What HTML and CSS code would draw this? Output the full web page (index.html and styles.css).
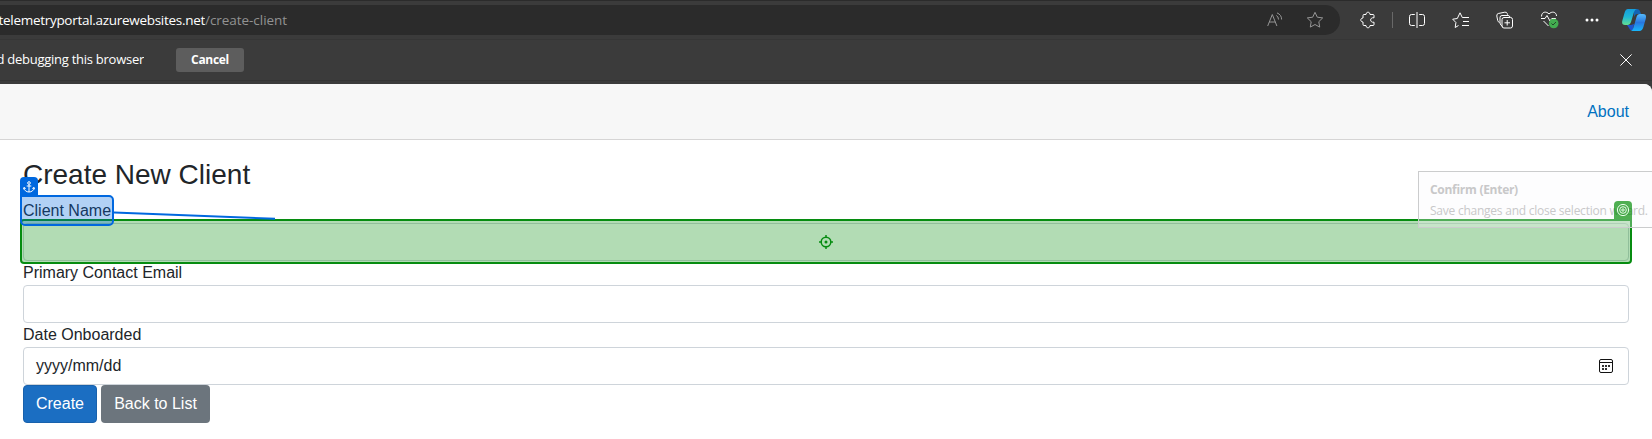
FILE: index.html
```
<!DOCTYPE html>
<html lang="en">
<head>
<meta charset="utf-8">
<title>Create New Client</title>
<link rel="stylesheet" href="styles.css">
</head>
<body>
<div class="browser">
  <div class="toolbar">
    <div class="address">
      <div class="host"><span>telemetryportal.azurewebsites.net</span></div><span class="path">/create-client</span>
      <div class="address-icons">
        <svg width="16" height="16" viewBox="0 0 16 16"><path d="M.7 14 5.300 2.500 9.900 14M2.200 10h6.200M9.300 3.500q2.200 1 2.200 4M10 .9q4.600 1.800 4.600 6.600"/></svg>
        <svg width="18" height="18" viewBox="0 0 18 18"><path d="M9 1.300 11.300 6.200 16.700 6.900 12.800 10.700 13.700 16.100 9 13.500 4.300 16.100 5.200 10.700 1.300 6.900 6.700 6.200Z"/></svg>
      </div>
    </div>
    <div class="tools">
      <svg class="puzzle" width="16" height="18" viewBox="0 0 16 18"><path d="M4 3.500h2c-.2-3 4.200-3 4 0h3q1 0 1 1v2.300c-4.500-.8-4.500 5.200 0 4.400v2.300q0 1-1 1h-3c.2 3-4.200 3-4 0H4q-1 0-1-1V11c-3-.2-3-3.800 0-4V4.500q0-1 1-1Z"/></svg>
      <i class="divider"></i>
      <svg class="split" width="16" height="16" viewBox="0 0 16 16"><path d="M8 0v16M5.800 2.500H2.500q-2 0-2 2v7q0 2 2 2h3.300M10.200 2.500h3.300q2 0 2 2v7q0 2-2 2h-3.300"/></svg>
      <svg class="favs" width="18" height="16" viewBox="0 0 18 16"><path d="m6.500 13.500-3.300 2 .7-5L.7 7.200 5.300 6.500 8 .8l2.300 4.700H17M11 9.500h6M10 13.500h7"/></svg>
      <svg class="collections" width="18" height="18" viewBox="0 0 18 18"><path d="M3.500 11.500q-1.500-.5-1.800-2L.8 5q-.3-2 1.500-2.500l6.500-1.300q2-.4 2.500 1.500l.2 1M6.500 15.500Q4 14 4 12V6.500q0-2 2-2h6q1.500 0 2 1.500"/><rect x="6" y="6.500" width="10.500" height="10.500" rx="2"/><path d="M11.200 9v5.500M8.500 11.800H14"/></svg>
      <svg class="health" width="19" height="18" viewBox="0 0 19 18"><path d="M1.500 5.500C1.500.5 6.500 0 9 3c2.500-3 7.500-2.300 7.500 2M1 7.500h4l2-3 3 5.500 1.800-2.500h4M3.500 10l5 5"/><circle cx="13.700" cy="12.500" r="4.800" class="ok"/><path class="tick" d="m11.500 12.500 1.500 1.500 3-3"/></svg>
      <svg class="more" width="14" height="4" viewBox="0 0 14 4"><circle cx="2" cy="2" r="1.500"/><circle cx="7" cy="2" r="1.500"/><circle cx="12" cy="2" r="1.500"/></svg>
      <svg class="copilot" width="24" height="24" viewBox="0 0 24 24">
        <defs><linearGradient id="a" x2="0" y2="1"><stop stop-color="#159ddc"/><stop offset=".5" stop-color="#20b7d5"/><stop offset="1" stop-color="#62df91"/></linearGradient><linearGradient id="b" x2="0" y2="1"><stop stop-color="#55b9fa"/><stop offset=".5" stop-color="#2876df"/><stop offset="1" stop-color="#17b7fc"/></linearGradient></defs>
        <path fill="#1264b4" d="M12 1h3q2.500 0 3.300 3l.7 2h-4q-2 0-3 3Z"/>
        <path fill="#1d54cf" d="M5 17h4l3-1-1 6q-3 1-4-2Z"/>
        <path fill="url(#a)" d="M6 1h9q-2 0-3 3l-3 10q-1 3-3.500 3H3q-4 0-2.500-5l2-7Q3.500 1 6 1Z"/>
        <path fill="url(#b)" d="M18 6h3q4 0 2.700 5l-2.300 8q-1.200 4-4 4H8q2.500 0 3.500-3.500L14.500 9Q15.300 6 18 6Z"/>
      </svg>
    </div>
  </div>
  <div class="infobar">
    <div class="message"><span>d debugging this browser</span></div>
    <button class="cancel">Cancel</button>
    <svg class="close" width="12" height="12" viewBox="0 0 12 12"><path d="m.4.400 11.200 11.200M11.600.4.400 11.600"/></svg>
  </div>
</div>
<main class="page">
  <header class="top-row"><a>About</a></header>
  <section class="content">
    <h3>Create New Client</h3>
    <div class="field anchor-field">
      <label>Client Name</label>
      <div class="anchor-box"><span class="anchor-tag"><svg width="12" height="12" viewBox="0 0 12 12"><circle cx="6" cy="2" r="1.300"/><path d="M6 3.300V11M3.700 5h4.600M1 6.500C1 9.500 3.500 11 6 11s5-1.500 5-4.500M.5 8.300 1 6.500l1.700 1M11.500 8.300 11 6.500l-1.700 1"/></svg></span></div>
      <svg class="link" width="162" height="10" viewBox="0 0 162 10"><path d="m0 1.500 161 6.300"/></svg>
    </div>
    <div class="field target-field">
      <div class="input"></div>
      <div class="target-box">
        <svg width="14" height="14" viewBox="0 0 14 14"><circle cx="7" cy="7" r="4.800"/><circle cx="7" cy="7" r="1.500" class="dot"/><path d="M7 0v2.500M7 11.500V14M0 7h2.500M11.500 7H14"/></svg>
      </div>
      <div class="tooltip"><b>Confirm (Enter)</b><span>Save changes and close selection wizard.</span></div>
      <span class="target-tag"><svg width="14" height="14" viewBox="0 0 14 14"><circle cx="7" cy="7" r="5.600"/><circle cx="7" cy="7" r="3.300"/><circle cx="7" cy="7" r="1.200"/></svg></span>
    </div>
    <div class="field"><label>Primary Contact Email</label><div class="input"></div></div>
    <div class="field"><label>Date Onboarded</label><div class="input date"><span>yyyy/mm/dd</span>
      <svg width="14" height="14" viewBox="0 0 14 14"><rect x=".5" y=".5" width="13" height="13" rx="1.500"/><path d="M1 3.500h12"/><path class="days" d="M3 7h2M6 7h2M9 7h2M3 10h2M6 10h2"/></svg></div></div>
    <div class="actions"><button class="btn primary">Create</button><button class="btn secondary">Back to List</button></div>
  </section>
</main>
</body>
</html>
```
FILE: styles.css
```
* { box-sizing: border-box; }
body { margin: 0; width: 1652px; height: 439px; overflow: hidden; background: #3b3b3b; font: 16px/24px "Liberation Sans", Arial, sans-serif; color: #212529; }
svg { display: block; fill: none; stroke: currentColor; flex: none; }
button { border: 0; padding: 0; }
.browser { height: 84px; color: #fff; font: 13px/18px "Open Sans", "Noto Sans", sans-serif; }
.toolbar { height: 40px; padding-top: 4px; border-top: 1px solid #2b2b2b; border-bottom: 1px solid #363636; display: flex; }
.address { width: 1340px; height: 30px; background: #2b2b2b; border-radius: 0 15px 15px 0; display: flex; align-items: center; font-size: 13.5px; }
.host { width: 205px; display: flex; justify-content: flex-end; overflow: hidden; letter-spacing: -.29px; }
.path { color: #929292; letter-spacing: -.05px; }
.address-icons { margin-left: auto; padding-right: 16px; display: flex; gap: 23px; align-items: center; color: #969696; }
.tools { flex: 1; height: 30px; display: flex; align-items: center; padding-left: 20px; }
.divider { width: 1px; height: 16px; background: #686868; margin-left: 16px; }
.split { margin-left: 16px; }
.favs { margin-left: 27px; }
.collections { margin-left: 26px; }
.health { margin-left: 26px; }
.ok { fill: #43ac50; stroke: none; }
.tick { stroke: #234629; }
.more { margin-left: 26px; fill: #fff; stroke: none; }
.copilot { margin-left: 23px; stroke: none; }
.infobar { height: 41px; display: flex; align-items: center; border-bottom: 1px solid #343434; padding-right: 20px; }
.message { width: 144px; display: flex; justify-content: flex-end; overflow: hidden; white-space: nowrap; letter-spacing: -.26px; padding-bottom: 2px; }
.cancel { width: 68px; height: 24px; margin-left: 32px; background: #5d5d5d; border-radius: 3px; color: #fff; font: 700 12px/24px "Open Sans", sans-serif; letter-spacing: -.3px; }
.close { margin-left: auto; }
.page { height: 355px; background: #fff; border-radius: 0 8px 0 0; overflow: hidden; }
.top-row { height: 56px; background: #f7f7f7; border-bottom: 1px solid #d6d5d5; display: flex; align-items: center; justify-content: flex-end; padding-right: 23px; }
.top-row a { color: #0071c1; }
.content { padding: 17.600px 23px 0; }
h3 { margin: 0 0 8px; font-size: 28px; line-height: 33.600px; font-weight: 400; }
.field { position: relative; }
label { display: block; height: 24px; }
.input { height: 38px; border: 1px solid #ced4da; border-radius: 4px; background: #fff; }
.date { display: flex; align-items: center; justify-content: space-between; padding: 0 15px 0 12px; color: #212529; }
.date svg { color: #111; }
.days { stroke: #333; stroke-width: 2; }
.anchor-field { z-index: 3; }
.anchor-box { position: absolute; left: -3px; top: -4px; width: 94px; height: 31px; border: 2px solid #0068df; border-radius: 5px; border-top-left-radius: 0; background: rgba(0,104,223,.3); }
.anchor-tag { position: absolute; left: -2px; top: -20px; width: 18px; height: 20px; display: grid; place-items: center; background: #0068df; border-radius: 4px 4px 0 0; color: #fff; }
.link { position: absolute; left: 91px; top: 12px; color: #0068df; stroke-width: 2; }
.target-field { z-index: 2; }
.target-box { position: absolute; inset: -4px -3px -3px; border: 2px solid #068c10; border-radius: 4px; border-top-right-radius: 0; background: rgba(0,139,5,.3); display: grid; place-items: center; color: #068c10; }
.target-box svg { stroke-width: 1.500; }
.dot { fill: currentColor; stroke: none; }
.tooltip { position: absolute; left: 1395px; top: -52px; width: 300px; height: 57px; padding: 7px 11px; border: 1px solid #cbcccd; background: rgba(247,250,253,.3); color: #c8c8c9; font: 12px/21px "Open Sans", sans-serif; letter-spacing: -.24px; white-space: nowrap; }
.tooltip b, .tooltip span { display: block; }
.tooltip b { letter-spacing: -.28px; }
.target-tag { position: absolute; right: -3px; top: -22px; width: 18px; height: 18px; display: grid; place-items: center; color: #eaffea; background: rgba(0,139,5,.69); border-radius: 4px 4px 0 0; }
.actions { display: flex; gap: 4px; }
.btn { height: 38px; border-radius: 4px; color: #fff; font: 16px/24px "Liberation Sans", sans-serif; }
.primary { width: 74px; background: #1b6ec2; border: 1px solid #1861ac; }
.secondary { width: 109px; background: #6c757d; }
```
